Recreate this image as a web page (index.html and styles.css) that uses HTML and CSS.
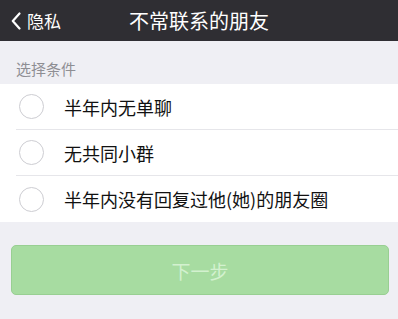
FILE: index.html
```html
<!DOCTYPE html>
<html lang="zh">
<head>
<meta charset="utf-8">
<link rel="stylesheet" href="styles.css">
</head>
<body>
<div class="page">
  <header class="nav">
    <div class="back">
      <svg class="chev" width="10" height="18" viewBox="0 0 10 18"><path d="M8.5 1.5 L1.8 9 L8.5 16.5" fill="none" stroke="#ffffff" stroke-width="2.2" stroke-linecap="round" stroke-linejoin="round"/></svg>
      <span>隐私</span>
    </div>
    <div class="title">不常联系的朋友</div>
  </header>
  <div class="section-label">选择条件</div>
  <ul class="list">
    <li class="row"><span class="radio"></span><span class="text">半年内无单聊</span></li>
    <li class="row"><span class="radio"></span><span class="text">无共同小群</span></li>
    <li class="row"><span class="radio"></span><span class="text">半年内没有回复过他(她)的朋友圈</span></li>
  </ul>
  <div class="actions">
    <button class="next">下一步</button>
  </div>
</div>
</body>
</html>
```
FILE: styles.css
```css
html, body {
  margin: 0;
  padding: 0;
  background: #efeff4;
  font-family: "Noto Sans CJK SC", "Noto Sans", sans-serif;
}
.page {
  width: 398px;
  height: 319px;
  overflow: hidden;
  background: #efeff4;
}
.nav {
  position: relative;
  height: 41px;
  background: #2f2e33;
  display: flex;
  align-items: center;
  justify-content: center;
}
.back {
  position: absolute;
  left: 11px;
  top: 0;
  height: 41px;
  display: flex;
  align-items: center;
  gap: 6px;
  color: #ffffff;
  font-size: 17px;
}
.chev {
  display: block;
}
.title {
  color: #ffffff;
  font-size: 20px;
  line-height: 41px;
}
.section-label {
  height: 43px;
  box-sizing: border-box;
  padding: 17px 0 0 16px;
  color: #8e8e93;
  font-size: 15px;
  line-height: 22px;
}
.list {
  list-style: none;
  margin: 0;
  padding: 0 0 0 16px;
  background: #ffffff;
}
.row {
  height: 46px;
  display: flex;
  align-items: center;
  border-bottom: 1px solid #e6e6ea;
  box-sizing: border-box;
}
.row:last-child {
  border-bottom: none;
}
.radio {
  width: 23px;
  height: 23px;
  border: 1px solid #cdcdd2;
  border-radius: 50%;
  margin-left: 3px;
  flex: none;
}
.text {
  margin-left: 20px;
  font-size: 18px;
  color: #111111;
}
.actions {
  padding: 23px 9px 0 11px;
}
.next {
  display: block;
  width: 100%;
  height: 50px;
  border: 1px solid #98cf92;
  border-radius: 5px;
  background: #a7dca1;
  color: #d3f1cf;
  font-family: "Noto Sans CJK SC", "Noto Sans", sans-serif;
  font-size: 19px;
  padding: 0;
}
```
